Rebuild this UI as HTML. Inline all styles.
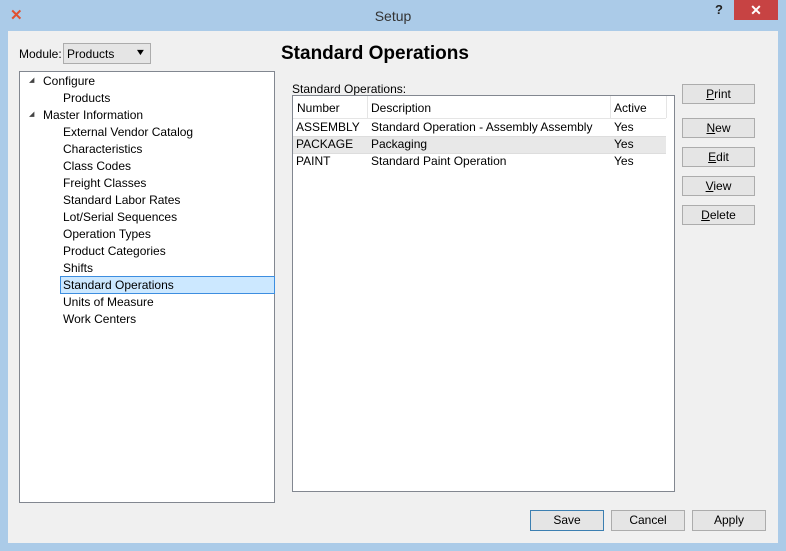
<!DOCTYPE html><html><head><style>
body{margin:0;width:786px;height:551px;background:#abcbe8;font-family:"Liberation Sans",sans-serif;font-size:12px;color:#000;position:relative;overflow:hidden}
.a{position:absolute}
.client{left:8px;top:31px;width:770px;height:512px;background:#f0f0f0}
.btn{position:absolute;background:#e5e5e5;border:1px solid #acacac;text-align:center;line-height:19px;font-size:12px;box-sizing:border-box}
.t{position:absolute;white-space:nowrap}
</style></head><body>
<div class="a" style="left:10px;top:6px;font-weight:bold;font-size:15px;color:#e05030">✕</div>
<div class="t" style="left:0;width:786px;text-align:center;top:8px;font-size:14px;color:#333">Setup</div>
<div class="t" style="left:715px;top:2px;font-weight:bold;font-size:13px;color:#222">?</div>
<div class="a" style="left:734px;top:0;width:44px;height:20px;background:#c74343;color:#fff;text-align:center;font-size:14px;line-height:20px;font-weight:bold">✕</div>
<div class="a client"></div>
<div class="t" style="left:19px;top:47px">Module:</div>
<div class="a" style="left:63px;top:43px;width:86px;height:19px;border:1px solid #acacac;background:#e5e5e5"><span class="t" style="left:3px;top:3px">Products</span><span class="t" style="left:72px;top:3px;font-size:9px;transform:scaleX(1.3)">▼</span></div>
<div class="t" style="left:281px;top:43px;font-size:19px;font-weight:bold">Standard Operations</div>
<div class="a" style="left:19px;top:71px;width:254px;height:430px;background:#fff;border:1px solid #828790"></div>
<div class="a" style="left:60px;top:276px;width:213px;height:16px;background:#cce8ff;border:1px solid #3d8ee0"></div>
<div class="t" style="left:29px;top:76px;font-size:7px;color:#444">◢</div>
<div class="t" style="left:29px;top:110px;font-size:7px;color:#444">◢</div>
<div class="t" style="left:43px;top:73px;line-height:17px">Configure</div>
<div class="t" style="left:63px;top:90px;line-height:17px">Products</div>
<div class="t" style="left:43px;top:107px;line-height:17px">Master Information</div>
<div class="t" style="left:63px;top:124px;line-height:17px">External Vendor Catalog<br>Characteristics<br>Class Codes<br>Freight Classes<br>Standard Labor Rates<br>Lot/Serial Sequences<br>Operation Types<br>Product Categories<br>Shifts<br>Standard Operations<br>Units of Measure<br>Work Centers</div>
<div class="t" style="left:292px;top:82px">Standard Operations:</div>
<div class="a" style="left:292px;top:95px;width:381px;height:395px;background:#fff;border:1px solid #828790"></div>
<div class="a" style="left:293px;top:96px;width:373px;height:22px;background:#fff;border-bottom:1px solid #e5e5e5"></div>
<div class="a" style="left:367px;top:96px;width:1px;height:22px;background:#e5e5e5"></div>
<div class="a" style="left:610px;top:96px;width:1px;height:22px;background:#e5e5e5"></div>
<div class="a" style="left:666px;top:96px;width:1px;height:22px;background:#e5e5e5"></div>
<div class="a" style="left:293px;top:136px;width:373px;height:16px;background:#e8e8e8;border-top:1px solid #ddd;border-bottom:1px solid #ddd"></div>
<div class="t" style="left:297px;top:101px">Number</div><div class="t" style="left:371px;top:101px">Description</div><div class="t" style="left:614px;top:101px">Active</div>
<div class="t" style="left:296px;top:119px;line-height:17px">ASSEMBLY<br>PACKAGE<br>PAINT</div>
<div class="t" style="left:371px;top:119px;line-height:17px">Standard Operation - Assembly Assembly<br>Packaging<br>Standard Paint Operation</div>
<div class="t" style="left:614px;top:119px;line-height:17px">Yes<br>Yes<br>Yes</div>
<div class="btn" style="left:682px;top:84px;width:73px;height:20px"><u>P</u>rint</div>
<div class="btn" style="left:682px;top:118px;width:73px;height:20px"><u>N</u>ew</div>
<div class="btn" style="left:682px;top:147px;width:73px;height:20px"><u>E</u>dit</div>
<div class="btn" style="left:682px;top:176px;width:73px;height:20px"><u>V</u>iew</div>
<div class="btn" style="left:682px;top:205px;width:73px;height:20px"><u>D</u>elete</div>
<div class="btn" style="left:530px;top:510px;width:74px;height:21px;border-color:#3c7fb1">Save</div>
<div class="btn" style="left:611px;top:510px;width:74px;height:21px">Cancel</div>
<div class="btn" style="left:692px;top:510px;width:74px;height:21px">Apply</div>
</body></html>
